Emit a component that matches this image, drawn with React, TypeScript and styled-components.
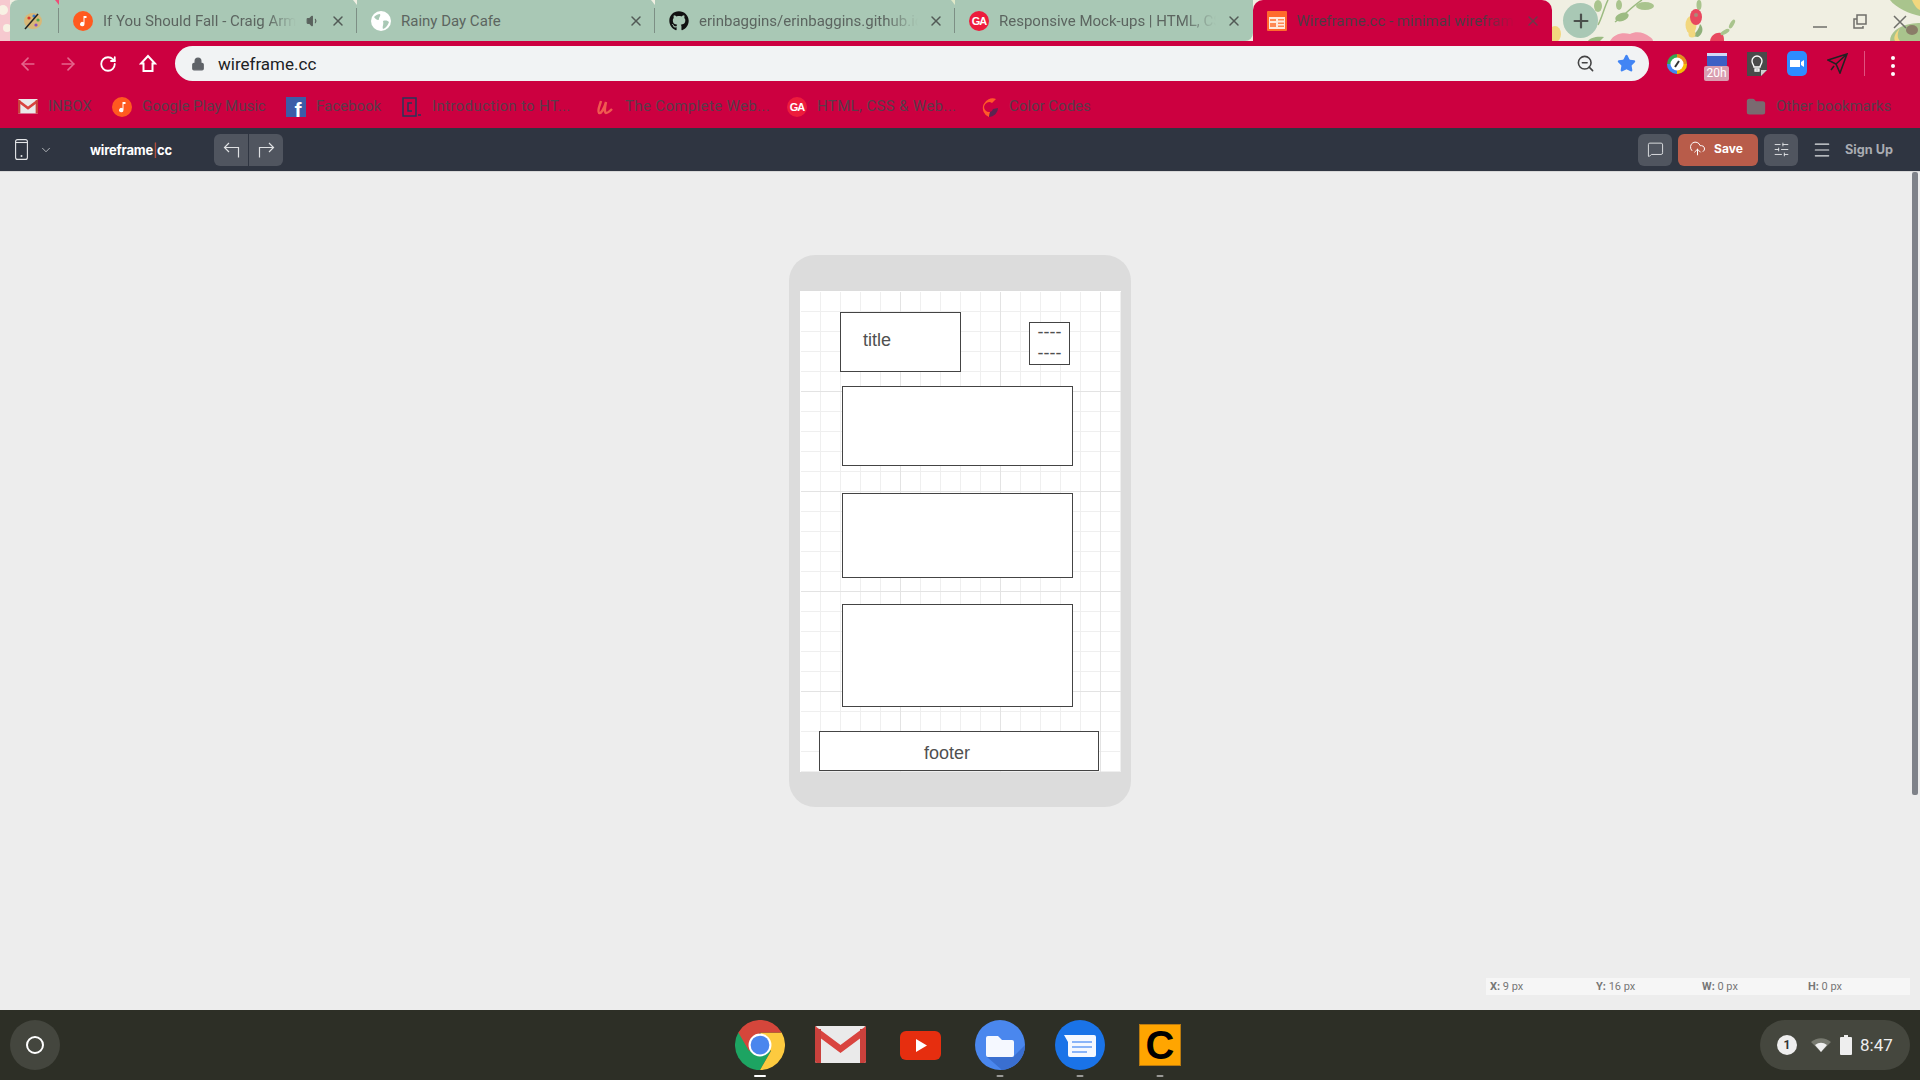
import React from 'react'
import styled, { createGlobalStyle } from 'styled-components'
import {
  ArrowLeft, ArrowRight, ChevronDown, CloudUpload, Folder, Lock, Menu, MessageSquare, Plus,
  RotateCw, SlidersHorizontal, Star, Volume1, X, ZoomOut
} from 'lucide-react'
import { FaGithub } from 'react-icons/fa'

const GlobalStyle = createGlobalStyle`
  html, body {
    margin: 0;
    padding: 0;
    overflow: hidden;
  }
  body {
    font-family: Roboto, "Liberation Sans", sans-serif;
  }
`

const Page = styled.div`
  width: 1920px;
  height: 1080px;
  display: flex;
  flex-direction: column;
  overflow: hidden;
`

const TabStrip = styled.div`
  position: relative;
  height: 41px;
  flex: none;
  display: flex;
  padding-left: 10px;
  background: #cc0040;
`

const WallpaperArt = styled.svg`
  position: absolute;
  inset: 0;
`

const Tab = styled.div<{ $width: number; $active?: boolean }>`
  position: relative;
  width: ${p => p.$width}px;
  flex: none;
  display: flex;
  align-items: center;
  box-sizing: border-box;
  padding: 0 11px 0 14px;
  gap: 10px;
  font-size: 15px;
  color: ${p => (p.$active ? '#4b3a44' : '#5c6560')};
  background: ${p => (p.$active ? '#cc0040' : '#a9c8b5')};
  border-radius: ${p => (p.$active ? '10px 10px 0 0' : '0')};
`

const PinnedTab = styled(Tab)`
  padding: 0 0 0 13px;
  border-radius: 8px 0 0 0;
`

const LastTab = styled(Tab)`
  border-radius: 0 0 8px 0;
`

const Divider = styled.span`
  position: absolute;
  right: 0;
  top: 8px;
  width: 1px;
  height: 25px;
  background: #7d8f85;
`

const Notch = styled.span<{ $color: string }>`
  position: absolute;
  right: -4px;
  top: 0;
  width: 8px;
  height: 5px;
  background: ${p => p.$color};
  clip-path: polygon(0 0, 100% 0, 50% 100%);
`

const TabIcon = styled.svg`
  flex: none;
`

const GithubIcon = styled(FaGithub)`
  flex: none;
  color: #111111;
`

const TabTitle = styled.span<{ $fade?: boolean }>`
  flex: 1;
  min-width: 0;
  padding-top: 1px;
  white-space: nowrap;
  overflow: hidden;
  ${p => p.$fade && `
    -webkit-mask-image: linear-gradient(to right, #000 85%, transparent 100%);
    mask-image: linear-gradient(to right, #000 85%, transparent 100%);
  `}
`

const TabClose = styled(X)`
  flex: none;
  width: 16px;
  height: 16px;
  stroke-width: 2.2;
  color: #525a56;
`

const ActiveClose = styled(TabClose)`
  color: #6b3a4a;
`

const NewTabButton = styled.div`
  position: relative;
  width: 35px;
  height: 35px;
  margin: 3px 0 0 11px;
  border-radius: 50%;
  background: #a9c8b5;
  display: flex;
  align-items: center;
  justify-content: center;
  color: #4a504c;
`

const WindowControls = styled.div`
  position: relative;
  margin-left: auto;
  display: flex;
`

const WindowButton = styled.div`
  width: 40px;
  height: 41px;
  display: flex;
  align-items: center;
  justify-content: center;
  padding-top: 3px;
  box-sizing: border-box;
  color: #6f6f6a;
`

const NavBar = styled.div`
  height: 44px;
  flex: none;
  display: flex;
  padding: 5px 0 0 8px;
  box-sizing: border-box;
  background: #cc0040;
`

const NavButton = styled.div<{ $dim?: boolean }>`
  width: 40px;
  height: 35px;
  display: flex;
  align-items: center;
  justify-content: center;
  color: ${p => (p.$dim ? '#e5668c' : '#ffffff')};
`

const Omnibox = styled.div`
  width: 1474px;
  height: 35px;
  margin-left: 7px;
  padding: 0 13px 0 16px;
  box-sizing: border-box;
  display: flex;
  align-items: center;
  border-radius: 18px;
  background: #f1f3f4;
  color: #5f6368;
`

const Url = styled.span`
  margin-left: 13px;
  padding-top: 1px;
  font-size: 17px;
  color: #202124;
  flex: 1;
`

const StarIcon = styled(Star)`
  margin-left: 22px;
  color: #4285f4;
  fill: #4285f4;
`

const ExtensionList = styled.div`
  display: flex;
  margin-left: 8px;
`

const ExtensionSlot = styled.div`
  position: relative;
  width: 40px;
  height: 35px;
  display: flex;
  align-items: center;
  justify-content: center;
`

const TimerIcon = styled.svg`
  margin-top: -8px;
`

const ExtensionBadge = styled.span`
  position: absolute;
  left: 7px;
  top: 20px;
  width: 25px;
  height: 15px;
  border-radius: 2px;
  background: #d99eb0;
  color: #ffffff;
  font-size: 12px;
  line-height: 15px;
  text-align: center;
`

const Separator = styled.span`
  width: 1px;
  height: 25px;
  margin: 5px 0 0 7px;
  background: #e0527f;
`

const MoreDots = styled.div`
  margin: 10px 0 0 26px;
  display: flex;
  flex-direction: column;
  gap: 4px;
`

const Dot = styled.span`
  width: 4px;
  height: 4px;
  border-radius: 50%;
  background: #ffffff;
`

const BookmarkBar = styled.div`
  height: 43px;
  flex: none;
  display: flex;
  align-items: center;
  gap: 22px;
  padding: 0 30px 0 18px;
  box-sizing: border-box;
  background: #cc0040;
`

const Bookmark = styled.div`
  display: flex;
  align-items: center;
  gap: 10px;
`

const OtherBookmarks = styled(Bookmark)`
  margin-left: auto;
`

const BookmarkIcon = styled.span`
  width: 20px;
  height: 20px;
  flex: none;
  display: flex;
  align-items: center;
  justify-content: center;
`

const BookmarkLabel = styled.span<{ $width: number; $clipped?: boolean }>`
  width: ${p => p.$width}px;
  margin-top: -2px;
  font-size: 15px;
  color: #5a3c4a;
  white-space: nowrap;
  letter-spacing: ${p => (p.$clipped ? '0.35px' : '0')};
`

const AppBar = styled.div`
  height: 43px;
  flex: none;
  display: flex;
  align-items: center;
  padding: 0 27px 0 15px;
  box-sizing: border-box;
  background: #2f3541;
  color: #ffffff;
`

const DevicePicker = styled.div`
  display: flex;
  align-items: center;
  gap: 11px;
  width: 75px;
  color: #e4e6e8;
`

const Logo = styled.div`
  width: 124px;
  font-family: Inter, Roboto, sans-serif;
  font-size: 13px;
  font-weight: 700;
  letter-spacing: -0.2px;
`

const LogoBar = styled.span`
  color: #d0583c;
  font-weight: 400;
`

const HistoryGroup = styled.div`
  display: flex;
  height: 32px;
  width: 69px;
  border-radius: 6px;
  overflow: hidden;
  background: #50555f;
`

const HistoryButton = styled.div`
  flex: 1;
  display: flex;
  align-items: center;
  justify-content: center;
  color: #dfe1e3;
  padding-left: 1px;

  & + & {
    padding: 0 1px 0 0;
    border-left: 1px solid #2f3541;
  }
`

const HistoryIcon = styled.svg<{ $flip?: boolean }>`
  fill: none;
  stroke: currentColor;
  stroke-width: 1.2;
  transform: ${p => (p.$flip ? 'scaleX(-1)' : 'none')};
`

const AppActions = styled.div`
  margin-left: auto;
  display: flex;
  align-items: center;
  gap: 6px;
`

const IconButton = styled.div`
  width: 34px;
  height: 32px;
  border-radius: 6px;
  background: #50555f;
  display: flex;
  align-items: center;
  justify-content: center;
  color: #e4e6e8;
`

const SaveButton = styled.div`
  width: 80px;
  height: 32px;
  border-radius: 6px;
  background: #b85c4a;
  display: flex;
  align-items: center;
  gap: 8px;
  padding: 0 0 3px 11px;
  box-sizing: border-box;
  font-family: Inter, Roboto, sans-serif;
  font-size: 12px;
  font-weight: 700;
`

const SignUp = styled.div`
  display: flex;
  align-items: center;
  gap: 13px;
  margin-left: 8px;
  color: #a9acb2;
  font-family: Inter, Roboto, sans-serif;
  font-size: 12.7px;
  font-weight: 700;
`

const Workspace = styled.main`
  position: relative;
  flex: 1;
  display: flex;
  justify-content: center;
  align-items: flex-start;
  padding-top: 84px;
  box-sizing: border-box;
  background: #ededed;
  box-shadow: inset 0 1px 0 #d8d8d8;
`

const ScrollThumb = styled.div`
  position: absolute;
  left: 1912px;
  top: 1px;
  width: 6px;
  height: 623px;
  border-radius: 2px;
  background: #7f8289;
`

const PhoneFrame = styled.div`
  width: 342px;
  height: 552px;
  padding: 36px 10px 35px 11px;
  box-sizing: border-box;
  border-radius: 26px;
  background: #dcdcdc;
`

const GridCanvas = styled.div`
  position: relative;
  width: 321px;
  height: 481px;
  background-color: #ffffff;
  background-image:
    linear-gradient(to right, #e3e3e3 1px, transparent 1px),
    linear-gradient(to bottom, #e3e3e3 1px, transparent 1px),
    linear-gradient(to right, #efefef 1px, transparent 1px),
    linear-gradient(to bottom, #efefef 1px, transparent 1px);
  background-size: 100px 100px, 100px 100px, 20px 20px, 20px 20px;
  box-shadow: inset 1px 1px 0 #ffffff;
`

const WireBox = styled.div<{ $x: number; $y: number; $w: number; $h: number }>`
  position: absolute;
  left: ${p => p.$x}px;
  top: ${p => p.$y}px;
  width: ${p => p.$w}px;
  height: ${p => p.$h}px;
  box-sizing: border-box;
  border: 1px solid #444444;
  background: #ffffff;
  font-family: "Liberation Sans", Arial, sans-serif;
  font-size: 18px;
  color: #505050;
`

const TitleBox = styled(WireBox)`
  padding: 17px 0 0 22px;
  line-height: 21px;
`

const MenuBox = styled(WireBox)`
  line-height: 21px;
  text-align: center;
`

const MenuLine = styled.span`
  display: block;
  margin-top: -1px;

  & + & {
    margin-top: 0;
  }
`

const FooterBox = styled(WireBox)`
  line-height: 40px;
  padding: 1px 24px 0 0;
  text-align: center;
`

const CoordinateBar = styled.div`
  position: absolute;
  left: 1486px;
  top: 807px;
  width: 424px;
  height: 17px;
  display: flex;
  background: #f6f6f6;
  font-size: 11px;
  line-height: 17px;
  color: #777777;
`

const Coordinate = styled.div`
  width: 106px;
  padding-left: 4px;
  box-sizing: border-box;

  b {
    font-weight: 700;
  }
`

const Shelf = styled.footer`
  height: 70px;
  flex: none;
  display: grid;
  grid-template-columns: 1fr auto 1fr;
  align-items: center;
  background: #2d2f26;
`

const Launcher = styled.div`
  width: 50px;
  height: 50px;
  margin-left: 10px;
  border-radius: 50%;
  background: #44463e;
  display: flex;
  align-items: center;
  justify-content: center;
`

const LauncherRing = styled.span`
  width: 14px;
  height: 14px;
  border: 2px solid #ffffff;
  border-radius: 50%;
`

const ShelfApps = styled.div`
  display: flex;
`

const ShelfApp = styled.div`
  position: relative;
  width: 80px;
  height: 70px;
  display: flex;
  align-items: center;
  justify-content: center;
`

const RunDot = styled.span<{ $active?: boolean }>`
  position: absolute;
  bottom: 3px;
  left: 50%;
  transform: translateX(-50%);
  width: ${p => (p.$active ? 12 : 7)}px;
  height: 2px;
  border-radius: 1px;
  background: ${p => (p.$active ? '#ffffff' : '#9a9a96')};
`

const CodeIcon = styled.div`
  width: 42px;
  height: 42px;
  box-sizing: border-box;
  background: #ffa500;
  border: 1px solid #b97a10;
  color: #000000;
  font-family: "Liberation Sans", Arial, sans-serif;
  font-size: 40px;
  font-weight: 700;
  line-height: 40px;
  text-align: center;
`

const Tray = styled.div`
  justify-self: end;
  width: 150px;
  height: 50px;
  margin-right: 10px;
  padding-left: 17px;
  box-sizing: border-box;
  border-radius: 25px;
  background: #45473e;
  display: flex;
  align-items: center;
  color: #eeeeee;
  font-size: 17px;
`

const TrayBadge = styled.span`
  width: 20px;
  height: 20px;
  border-radius: 50%;
  background: #eeeeee;
  color: #333333;
  font-size: 12px;
  font-weight: 700;
  line-height: 20px;
  text-align: center;
`

const WifiIcon = styled.svg`
  margin-left: 14px;
`

const BatteryIcon = styled.svg`
  margin-left: 9px;
`

const TrayTime = styled.span`
  margin-left: 8px;
`

const GaCircle = styled.span`
  width: 20px;
  height: 20px;
  flex: none;
  border-radius: 50%;
  background: #ed1c3c;
  color: #ffffff;
  font-family: "Liberation Sans", sans-serif;
  font-size: 11px;
  font-weight: 700;
  line-height: 20px;
  text-align: center;
  letter-spacing: -1px;
`

const FacebookSquare = styled.span`
  width: 20px;
  height: 20px;
  flex: none;
  padding-left: 4px;
  box-sizing: border-box;
  background: #3b5ca8;
  color: #ffffff;
  font-family: "Liberation Sans", sans-serif;
  font-size: 21px;
  font-weight: 700;
  line-height: 25px;
  text-align: center;
  overflow: hidden;
`

const PlayMusic = () => (
  <TabIcon width="20" height="20" viewBox="0 0 20 20">
    <circle cx="10" cy="10" r="10" fill="#ff5a1f" />
    <path d="M10.500 5h3v2h-2v6a2.200 2.200 0 1 1-1-1.800z" fill="#fff" />
  </TabIcon>
)

const Globe = () => (
  <TabIcon width="20" height="20" viewBox="0 0 20 20">
    <circle cx="10" cy="10" r="10" fill="#fff" />
    <path d="M3 6c2-2 4-3 6-3 1 2-1 3-1 5s-3 1-5-2zM12 10c3-1 5 0 6 1-1 3-3 6-6 7-1-3 1-4 0-8z" fill="#a9c8b5" />
  </TabIcon>
)

const Palette = () => (
  <TabIcon width="20" height="20" viewBox="0 0 20 20">
    <ellipse cx="10" cy="10" rx="9" ry="8" fill="#d8b878" />
    <circle cx="6" cy="7" r="1.600" fill="#d8392b" />
    <circle cx="11" cy="5" r="1.600" fill="#3f7fd0" />
    <circle cx="15" cy="9" r="1.600" fill="#4aa84f" />
    <circle cx="13" cy="14" r="1.600" fill="#8a4fc0" />
    <path d="M2 18 15 3" stroke="#222" strokeWidth="1.500" />
  </TabIcon>
)

const SheetIcon = () => (
  <TabIcon width="20" height="20" viewBox="0 0 20 20">
    <rect width="20" height="20" rx="1" fill="#ff6b2c" />
    <path d="M2 6h16v12H2z" fill="#ffe9dc" />
    <path d="M3 8h6v2H3zM11 8h6v1.500h-6zM3 12h6v4H3zM11 11.500h6V13h-6zM11 14.500h6V16h-6z" fill="#ff8a55" />
  </TabIcon>
)

const MailIcon = ({ size = 20 }: { size?: number }) => (
  <svg width={size} height={size * 0.73} viewBox="0 0 51 37">
    <rect width="51" height="37" rx="2" fill="#eaeaea" />
    <path d="M0 2 25.500 21 51 2v8L25.500 29 0 10z" fill="#d9443f" transform="translate(0 -2)" />
    <path d="M0 3h6v34H2a2 2 0 0 1-2-2zM45 3h6v32a2 2 0 0 1-2 2h-4z" fill="#c9413c" />
  </svg>
)

const UdemyMark = () => (
  <svg width="20" height="20" viewBox="0 0 20 20">
    <path d="M6 4C5 8 2 14 4 16c2 1 5-4 7-11-1 5-2 10 0 11 2 0 4-2 6-4" fill="none" stroke="#ef5a50" strokeWidth="2.400" />
  </svg>
)

const CodeBook = () => (
  <svg width="20" height="20" viewBox="0 0 20 20">
    <rect x="1" y="1" width="13" height="18" fill="none" stroke="#26365a" strokeWidth="1.500" />
    <path d="M10 6H6v8h4" fill="none" stroke="#26365a" strokeWidth="1.500" />
    <path d="M16 18h3" stroke="#26365a" strokeWidth="1.500" />
  </svg>
)

const ColorCodes = () => (
  <svg width="20" height="20" viewBox="0 0 20 20">
    <path d="M17 2A9.500 9.500 0 1 0 10 20l1-5a5 5 0 1 1 2-9z" fill="#ff5a28" />
    <path d="M10 20a9 9 0 0 0 9-9l-5 1a4 4 0 0 1-3 3z" fill="#5a2450" />
  </svg>
)

const HomeIcon = () => (
  <svg width="18" height="19" viewBox="0 0 18 19" fill="none" stroke="#fff" strokeWidth="2">
    <path d="M9 2 2 9.500h2.500V17h9V9.500H16z" />
  </svg>
)

const PhoneIcon = () => (
  <svg width="13" height="21" viewBox="0 0 13 21" fill="none" stroke="currentColor" strokeWidth="1.100">
    <rect x="0.600" y="0.600" width="11.800" height="19.800" rx="2" />
    <path d="M0.600 3.500h11.800" />
    <circle cx="6.500" cy="17" r="1" fill="currentColor" stroke="none" />
  </svg>
)

const HistoryArrow = ({ flip }: { flip?: boolean }) => (
  <HistoryIcon $flip={flip} width="18" height="18" viewBox="0 0 18 18">
    <path d="M1.500 6.500H15.500V16.500M6 2 1.500 6.500 6 11" />
  </HistoryIcon>
)

const Wallpaper = () => (
  <WallpaperArt width="1920" height="41" viewBox="0 0 1920 41">
    <rect width="1920" height="41" fill="#f0efe2" />
    <path d="M0 0h10v41H0z" fill="#f6c9cf" />
    <circle cx="3" cy="10" r="5" fill="#f8f2e4" />
    <circle cx="7" cy="28" r="4" fill="#f8f2e4" />
    <g transform="translate(1550 0)">
      <path d="M48 25C52 18 54 8 58 0M65 22C74 16 80 8 92 0" stroke="#9cbb82" strokeWidth="1.500" fill="none" />
      <ellipse cx="48" cy="6" rx="4" ry="6" fill="#a9c48d" />
      <ellipse cx="72" cy="17" rx="7" ry="4" fill="#9cbb82" transform="rotate(-20 72 17)" />
      <ellipse cx="69" cy="5" rx="3" ry="5" fill="#a9c48d" />
      <ellipse cx="95" cy="6" rx="9" ry="4" fill="#a9c48d" />
      <ellipse cx="5" cy="34" rx="6" ry="8" fill="#f2d77e" />
      <path d="M60 41c4-7 12-9 20-7 6-3 14-2 20 3 2 1 3 3 3 4z" fill="#f29bab" />
      <path d="M38 41c2-3 8-5 16-4l-4 4z" fill="#9cbb82" />
      <ellipse cx="149" cy="5" rx="2.500" ry="5" fill="#a9c48d" />
      <ellipse cx="141" cy="25" rx="5.500" ry="9" fill="#f2d77e" />
      <ellipse cx="146" cy="17" rx="6" ry="8" fill="#e8485f" />
      <circle cx="146" cy="15" r="2" fill="#a88a7a" />
      <path d="M150 24c4 4 3 10-2 13l-6-1c4-3 7-7 8-12z" fill="#8fb07a" />
      <circle cx="142" cy="34" r="3.500" fill="#f2d77e" />
      <path d="M160 41c1-6 6-9 11-8 3 2 3 5 3 8z" fill="#e8485f" />
      <ellipse cx="175" cy="32" rx="5" ry="2" fill="#a9c48d" transform="rotate(-30 175 32)" />
      <ellipse cx="182" cy="24" rx="2" ry="5" fill="#a9c48d" transform="rotate(30 182 24)" />
      <path d="M335 0h12c3 5 12 12 23 14v-14z" fill="#f2d77e" />
      <path d="M340 0h22c2 5 5 9 8 10v6c-10-2-24-8-30-16z" fill="#a9c48d" />
      <path d="M340 41c0-8 8-15 20-17 4-1 8-1 10-1v18z" fill="#a9c48d" />
      <path d="M345 41c-2-4 1-9 5-13-3 5-3 10 0 13z" fill="#f2d77e" />
      <ellipse cx="362" cy="30" rx="6" ry="5" fill="#8a7d68" />
    </g>
  </WallpaperArt>
)

const Chrome = () => (
  <svg width="50" height="50" viewBox="0 0 48 48">
    <path d="M3.200 12A24 24 0 0 0 24 48L34.400 30 13.600 18z" fill="#1da462" />
    <path d="M44.800 12A24 24 0 0 1 24 48L34.400 30 24 12z" fill="#fdca3f" />
    <path d="M3.200 12A24 24 0 0 1 44.800 12H24L13.600 30z" fill="#d5463b" />
    <circle cx="24" cy="24" r="11" fill="#fff" />
    <circle cx="24" cy="24" r="9" fill="#4a86ee" />
  </svg>
)

const YouTube = () => (
  <svg width="41" height="29" viewBox="0 0 41 29">
    <rect width="41" height="29" rx="6" fill="#e62e0f" />
    <path d="M16 8l11 6.500L16 21z" fill="#fff" />
  </svg>
)

const Files = () => (
  <svg width="50" height="50" viewBox="0 0 50 50">
    <circle cx="25" cy="25" r="25" fill="#4a87ee" />
    <path d="M12 37 38 37 50 25A25 25 0 0 1 27 50z" fill="#3a6fd0" />
    <path d="M11 18a2 2 0 0 1 2-2h10l4 4h10a2 2 0 0 1 2 2v13a2 2 0 0 1-2 2H13a2 2 0 0 1-2-2z" fill="#f5f8ff" />
  </svg>
)

const Messages = () => (
  <svg width="50" height="50" viewBox="0 0 50 50">
    <circle cx="25" cy="25" r="25" fill="#1a73e8" />
    <path d="M9 15h30a2 2 0 0 1 2 2v18a2 2 0 0 1-2 2H15a2 2 0 0 1-2-2V22z" fill="#f5f8ff" />
    <path d="M17 21h20v2H17zM17 26h20v2H17zM17 31h15v2H17z" fill="#8ab4f8" />
  </svg>
)

const App = (): JSX.Element => {
  return (
    <Page>
      <GlobalStyle />
      <TabStrip>
        <Wallpaper />
        <PinnedTab $width={49}>
          <Palette />
          <Divider />
          <Notch $color="#ee4d78" />
        </PinnedTab>
        <Tab $width={298}>
          <PlayMusic />
          <TabTitle $fade>If You Should Fall - Craig Armstrong</TabTitle>
          <Volume1 size={14} fill="#59625d" />
          <TabClose />
          <Divider />
          <Notch $color="#f0efe2" />
        </Tab>
        <Tab $width={298}>
          <Globe />
          <TabTitle>Rainy Day Cafe</TabTitle>
          <TabClose />
          <Divider />
          <Notch $color="#f0efe2" />
        </Tab>
        <Tab $width={300}>
          <GithubIcon size={20} />
          <TabTitle $fade>erinbaggins/erinbaggins.github.io</TabTitle>
          <TabClose />
          <Divider />
          <Notch $color="#dfe8c8" />
        </Tab>
        <LastTab $width={298}>
          <GaCircle>GA</GaCircle>
          <TabTitle $fade>Responsive Mock-ups | HTML, CSS</TabTitle>
          <TabClose />
        </LastTab>
        <Tab $width={299} $active>
          <SheetIcon />
          <TabTitle $fade>Wireframe.cc - minimal wireframing</TabTitle>
          <ActiveClose />
        </Tab>
        <NewTabButton>
          <Plus size={22} strokeWidth={2.4} />
        </NewTabButton>
        <WindowControls>
          <WindowButton>
            <svg width="16" height="16" viewBox="0 0 16 16" stroke="currentColor" strokeWidth="1.500"><path d="M1 13h14" /></svg>
          </WindowButton>
          <WindowButton>
            <svg width="16" height="16" viewBox="0 0 16 16" fill="none" stroke="currentColor" strokeWidth="1.500"><path d="M5 1h9v9H5zM5 5H2v9h9v-2" /></svg>
          </WindowButton>
          <WindowButton>
            <svg width="16" height="16" viewBox="0 0 16 16" stroke="currentColor" strokeWidth="1.500"><path d="M2 2l12 12M14 2 2 14" /></svg>
          </WindowButton>
        </WindowControls>
      </TabStrip>

      <NavBar>
        <NavButton $dim><ArrowLeft size={20} /></NavButton>
        <NavButton $dim><ArrowRight size={20} /></NavButton>
        <NavButton><RotateCw size={18} strokeWidth={2.4} /></NavButton>
        <NavButton><HomeIcon /></NavButton>
        <Omnibox>
          <Lock size={14} fill="#5f6368" />
          <Url>wireframe.cc</Url>
          <ZoomOut size={19} color="#444" />
          <StarIcon size={19} />
        </Omnibox>
        <ExtensionList>
          <ExtensionSlot>
            <svg width="20" height="26" viewBox="0 0 20 26">
              <circle cx="10" cy="13" r="10" fill="#34a853" />
              <path d="M10 3a10 10 0 0 1 10 10H10z" fill="#ea8a1e" />
              <path d="M20 13a10 10 0 0 1-10 10V13z" fill="#fbbc04" />
              <path d="M10 23A10 10 0 0 1 0 13h10z" fill="#4285f4" />
              <circle cx="10" cy="13" r="6.500" fill="#fff" />
              <path d="M8 16l4-6" stroke="#333" strokeWidth="2" />
            </svg>
          </ExtensionSlot>
          <ExtensionSlot>
            <TimerIcon width="20" height="13" viewBox="0 0 20 13">
              <rect width="20" height="13" rx="1" fill="#3c5fc4" />
              <rect width="20" height="3" fill="#cfd8f5" />
            </TimerIcon>
            <ExtensionBadge>20h</ExtensionBadge>
          </ExtensionSlot>
          <ExtensionSlot>
            <svg width="20" height="24" viewBox="0 0 20 24">
              <path d="M0 0h20v18l-6 6H0z" fill="#4a4a4a" />
              <path d="M14 24v-6h6z" fill="#cfcfcf" />
              <path d="M7 15c0-2-2-3-2-6a5 5 0 0 1 10 0c0 3-2 4-2 6zM8 17h4v2H8z" fill="none" stroke="#fff" strokeWidth="1.300" />
            </svg>
          </ExtensionSlot>
          <ExtensionSlot>
            <svg width="20" height="25" viewBox="0 0 20 25">
              <rect width="20" height="25" rx="5" fill="#2d8cff" />
              <path d="M3 9h10v7H3zM14 11l3-2v7l-3-2z" fill="#fff" />
            </svg>
          </ExtensionSlot>
          <ExtensionSlot>
            <svg width="21" height="21" viewBox="0 0 21 21" fill="none" stroke="#222" strokeWidth="1.600">
              <path d="M1 7 20 1 13 20 9 11zM20 1 9 11M7 13l-3 4" />
            </svg>
          </ExtensionSlot>
        </ExtensionList>
        <Separator />
        <MoreDots><Dot /><Dot /><Dot /></MoreDots>
      </NavBar>

      <BookmarkBar>
        <Bookmark>
          <BookmarkIcon><MailIcon /></BookmarkIcon>
          <BookmarkLabel $width={42}>INBOX</BookmarkLabel>
        </Bookmark>
        <Bookmark>
          <BookmarkIcon><PlayMusic /></BookmarkIcon>
          <BookmarkLabel $width={122}>Google Play Music</BookmarkLabel>
        </Bookmark>
        <Bookmark>
          <FacebookSquare>f</FacebookSquare>
          <BookmarkLabel $width={64}>Facebook</BookmarkLabel>
        </Bookmark>
        <Bookmark>
          <BookmarkIcon><CodeBook /></BookmarkIcon>
          <BookmarkLabel $width={141} $clipped>Introduction to HT...</BookmarkLabel>
        </Bookmark>
        <Bookmark>
          <BookmarkIcon><UdemyMark /></BookmarkIcon>
          <BookmarkLabel $width={140} $clipped>The Complete Web...</BookmarkLabel>
        </Bookmark>
        <Bookmark>
          <GaCircle>GA</GaCircle>
          <BookmarkLabel $width={140} $clipped>HTML, CSS &amp; Web...</BookmarkLabel>
        </Bookmark>
        <Bookmark>
          <BookmarkIcon><ColorCodes /></BookmarkIcon>
          <BookmarkLabel $width={80}>Color Codes</BookmarkLabel>
        </Bookmark>
        <OtherBookmarks>
          <BookmarkIcon><Folder size={20} fill="#7a6a70" color="#7a6a70" /></BookmarkIcon>
          <BookmarkLabel $width={114}>Other bookmarks</BookmarkLabel>
        </OtherBookmarks>
      </BookmarkBar>

      <AppBar>
        <DevicePicker>
          <PhoneIcon />
          <ChevronDown size={14} strokeWidth={1.2} />
        </DevicePicker>
        <Logo>wireframe<LogoBar>|</LogoBar>cc</Logo>
        <HistoryGroup>
          <HistoryButton><HistoryArrow /></HistoryButton>
          <HistoryButton><HistoryArrow flip /></HistoryButton>
        </HistoryGroup>
        <AppActions>
          <IconButton><MessageSquare size={17} strokeWidth={1.3} /></IconButton>
          <SaveButton><CloudUpload size={17} strokeWidth={1.4} />Save</SaveButton>
          <IconButton><SlidersHorizontal size={17} strokeWidth={1.3} /></IconButton>
          <SignUp><Menu size={20} strokeWidth={1.4} color="#e4e6e8" />Sign Up</SignUp>
        </AppActions>
      </AppBar>

      <Workspace>
        <PhoneFrame>
          <GridCanvas>
            <TitleBox $x={40} $y={21} $w={121} $h={60}>title</TitleBox>
            <MenuBox $x={229} $y={31} $w={41} $h={43}><MenuLine>----</MenuLine><MenuLine>----</MenuLine></MenuBox>
            <WireBox $x={42} $y={95} $w={231} $h={80} />
            <WireBox $x={42} $y={202} $w={231} $h={85} />
            <WireBox $x={42} $y={313} $w={231} $h={103} />
            <FooterBox $x={19} $y={440} $w={280} $h={40}>footer</FooterBox>
          </GridCanvas>
        </PhoneFrame>
        <ScrollThumb />
        <CoordinateBar>
          <Coordinate><b>X:</b> 9 px</Coordinate>
          <Coordinate><b>Y:</b> 16 px</Coordinate>
          <Coordinate><b>W:</b> 0 px</Coordinate>
          <Coordinate><b>H:</b> 0 px</Coordinate>
        </CoordinateBar>
      </Workspace>

      <Shelf>
        <Launcher><LauncherRing /></Launcher>
        <ShelfApps>
          <ShelfApp><Chrome /><RunDot $active /></ShelfApp>
          <ShelfApp><MailIcon size={51} /></ShelfApp>
          <ShelfApp><YouTube /></ShelfApp>
          <ShelfApp><Files /><RunDot /></ShelfApp>
          <ShelfApp><Messages /><RunDot /></ShelfApp>
          <ShelfApp><CodeIcon>C</CodeIcon><RunDot /></ShelfApp>
        </ShelfApps>
        <Tray>
          <TrayBadge>1</TrayBadge>
          <WifiIcon width="20" height="14" viewBox="0 0 20 14">
            <path d="M0 4a15 15 0 0 1 20 0L10 14z" fill="#77796f" />
            <path d="M4 7a10 10 0 0 1 12 0l-6 7z" fill="#eeeeee" />
          </WifiIcon>
          <BatteryIcon width="12" height="20" viewBox="0 0 12 20">
            <path d="M4 0h4v2h3a1 1 0 0 1 1 1v16a1 1 0 0 1-1 1H1a1 1 0 0 1-1-1V3a1 1 0 0 1 1-1h3z" fill="#eeeeee" />
          </BatteryIcon>
          <TrayTime>8:47</TrayTime>
        </Tray>
      </Shelf>
    </Page>
  )
}

export default App
